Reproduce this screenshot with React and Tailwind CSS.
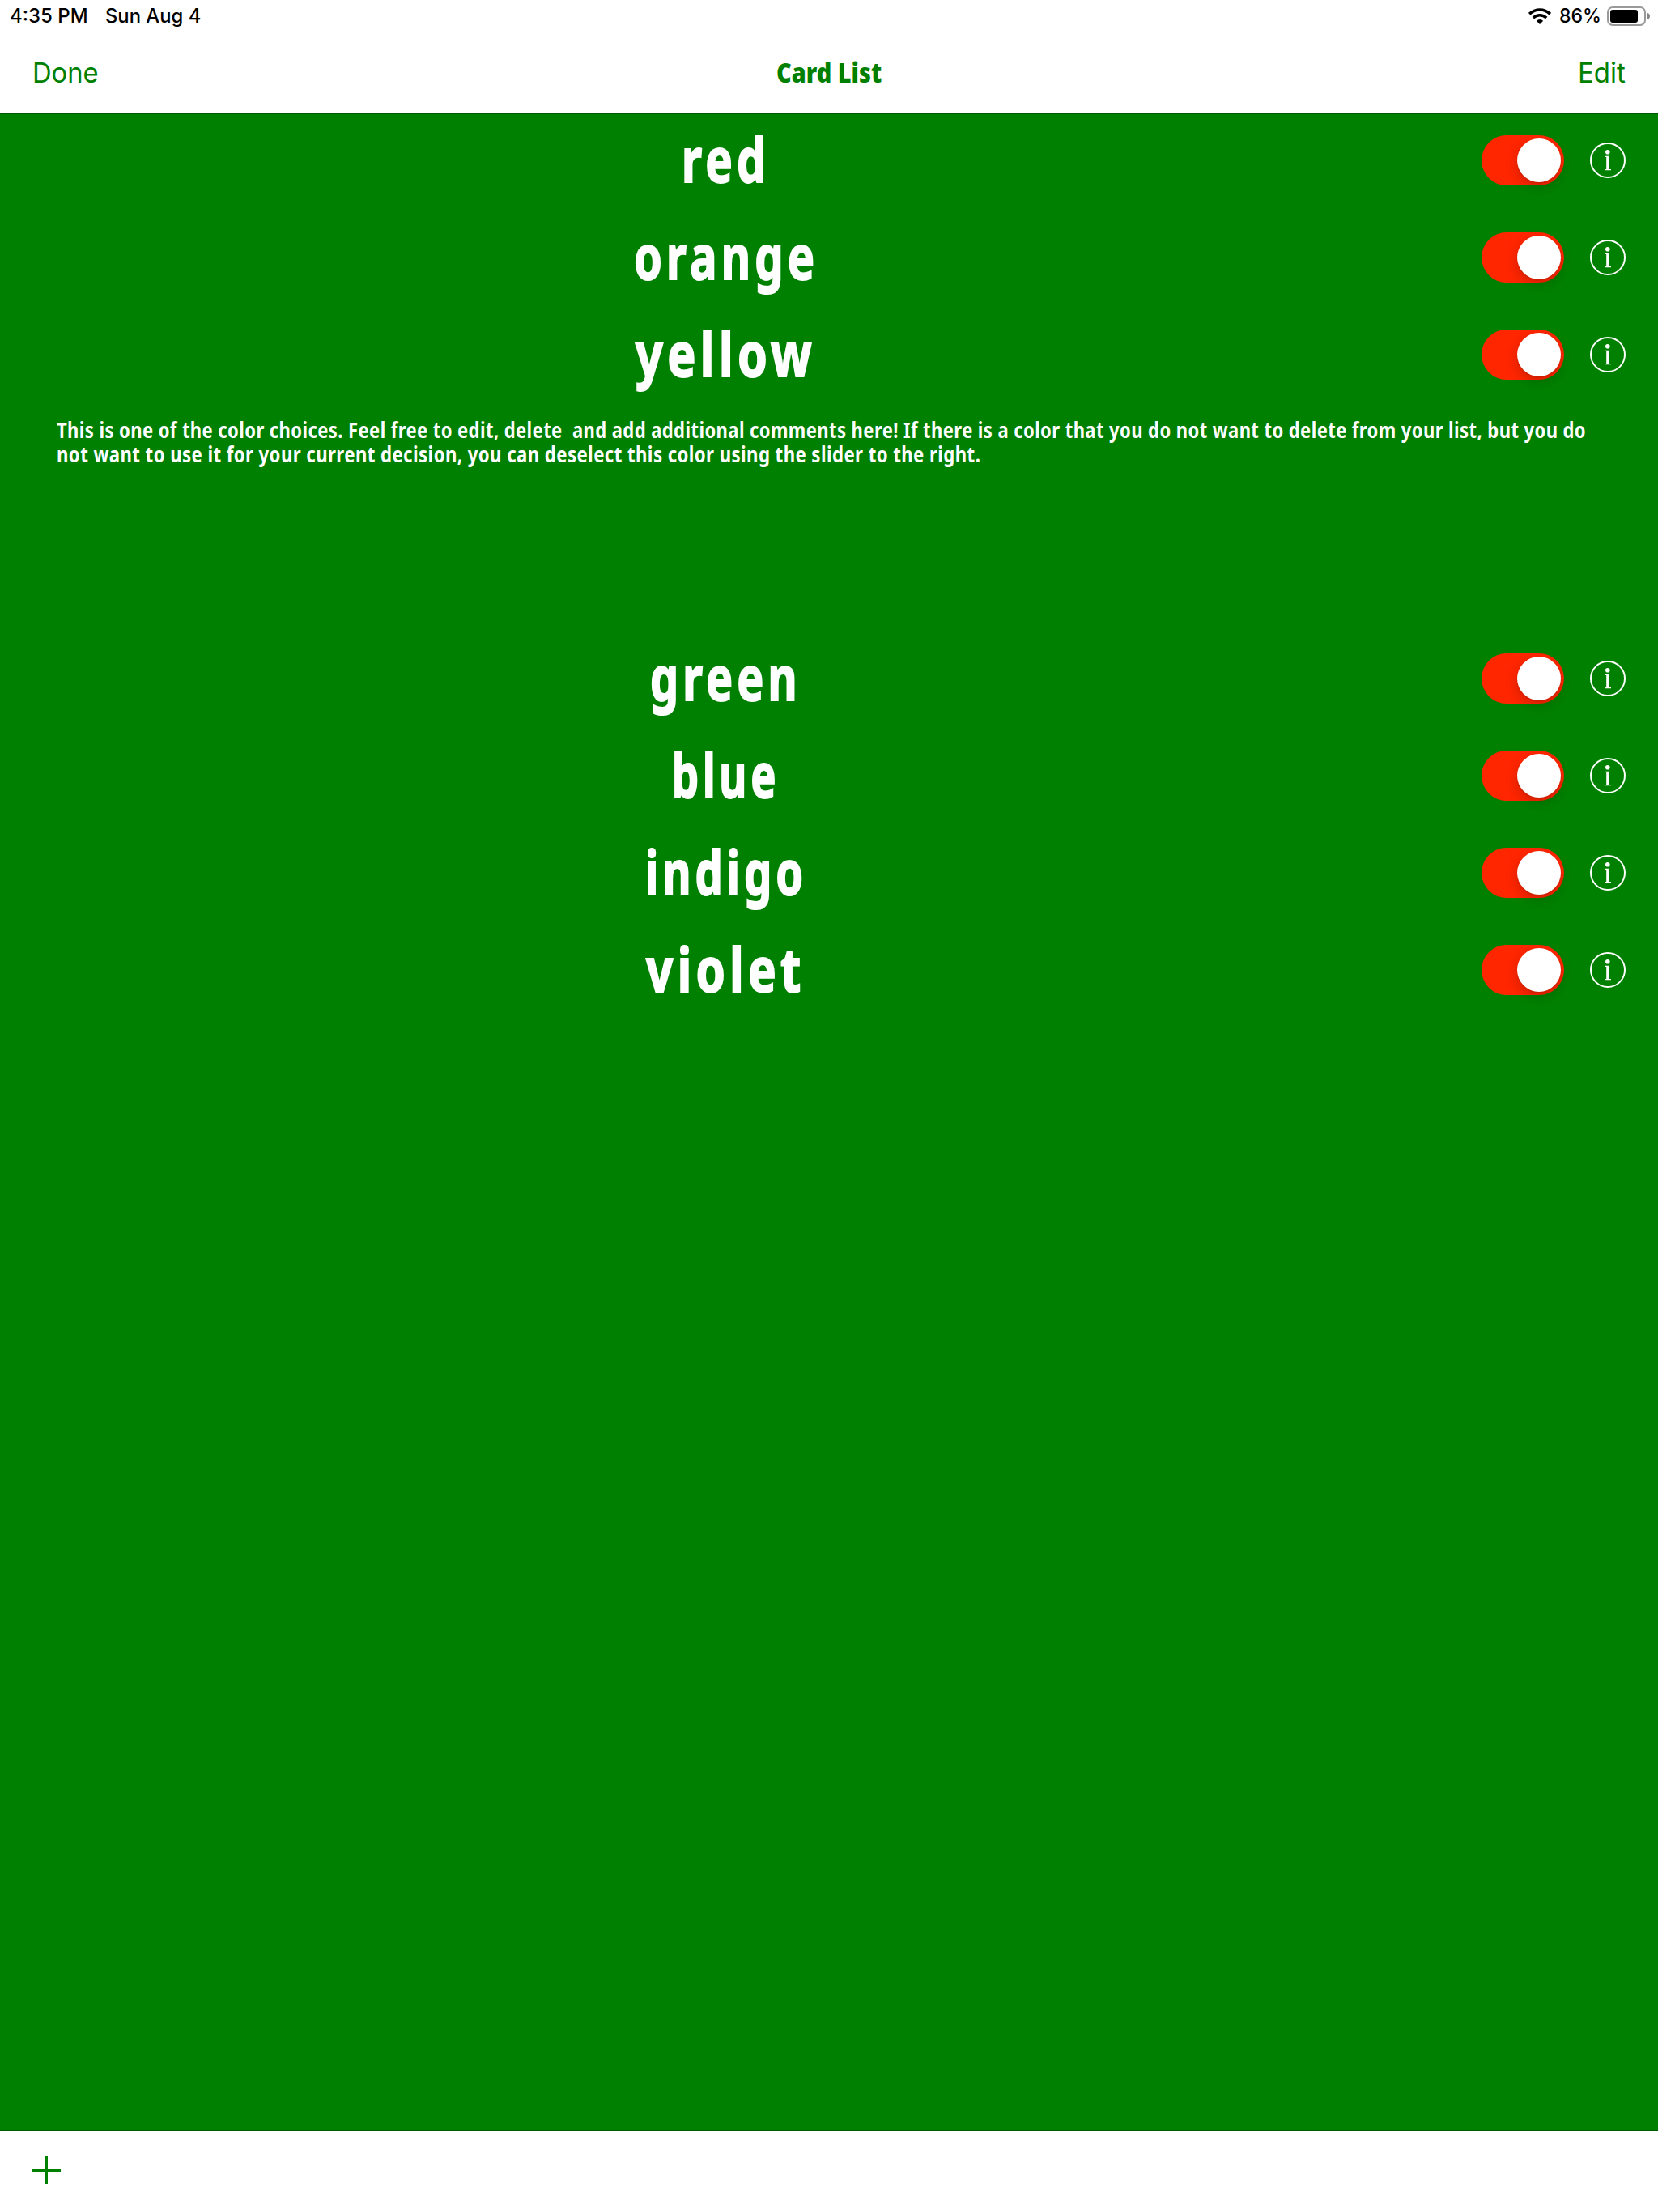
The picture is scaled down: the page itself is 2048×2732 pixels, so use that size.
import { useLayoutEffect, useRef, useState } from "react";

// Stretches or condenses one line of text horizontally to fill its box.
function Fit({ className = "", children }) {
  const box = useRef(null);
  const line = useRef(null);
  const [scale, setScale] = useState(1);
  useLayoutEffect(() => {
    const measure = () =>
      setScale(box.current.clientWidth / line.current.offsetWidth);
    measure();
    document.fonts?.ready.then(measure);
  }, []);
  return (
    <div ref={box} className={`shrink-0 whitespace-pre ${className}`}>
      <span
        ref={line}
        className="inline-block origin-left"
        style={{ transform: `scaleX(${scale})` }}
      >
        {children}
      </span>
    </div>
  );
}

const cards = [
  { name: "red", width: "w-[109px]" },
  { name: "orange", width: "w-[228px]" },
  { name: "yellow", width: "w-[223px]" },
  { name: "green", width: "w-[187px]" },
  { name: "blue", width: "w-[133px]" },
  { name: "indigo", width: "w-[200px]" },
  { name: "violet", width: "w-[197px]" },
];

const comment = [
  {
    text: "This is one of the color choices. Feel free to edit, delete  and add additional comments here! If there is a color that you do not want to delete from your list, but you do",
    width: "w-[1889px]",
  },
  {
    text: "not want to use it for your current decision, you can deselect this color using the slider to the right.",
    width: "w-[1141px]",
  },
];

function Toggle() {
  return (
    <div className="flex h-[62px] w-[102px] shrink-0 items-center justify-end rounded-full bg-[#ff2600] pr-1">
      <div className="size-[54px] rounded-full bg-white shadow-[0_6px_16px_rgba(0,0,0,0.18),0_2px_2px_rgba(0,0,0,0.08)]" />
    </div>
  );
}

function InfoIcon() {
  return (
    <svg className="ml-8 size-11 shrink-0" viewBox="0 0 44 44" fill="none">
      <circle cx="22" cy="22" r="21" stroke="white" strokeWidth="2" />
      <circle cx="21.8" cy="11.7" r="2.8" fill="white" />
      <path d="M18 16.7H24V33H26V34.2H18V33H20.2V18H18Z" fill="white" />
    </svg>
  );
}

function CardRow({ name, width }) {
  return (
    <div className="flex h-[120px] items-center pr-10">
      <div className="flex flex-1 justify-center pr-[37px] pb-[5px]">
        <Fit
          className={`text-[76px] leading-[115px] font-bold tracking-[7px] text-white [-webkit-text-stroke:2px_white] ${width}`}
        >
          {name}
        </Fit>
      </div>
      <Toggle />
      <InfoIcon />
    </div>
  );
}

export default function App() {
  return (
    <div className="flex h-[2732px] w-[2048px] flex-col overflow-hidden bg-white font-['Inter',sans-serif]">
      <div className="flex h-10 shrink-0 items-center pr-[9px] pl-3 text-[24px] leading-10 font-medium text-black">
        <Fit className="w-[97px]">4:35 PM</Fit>
        <Fit className="ml-[21px] w-[118px]">Sun Aug 4</Fit>
        <svg className="ml-auto h-[21px] w-7" viewBox="0 0 28 21" fill="none" stroke="black">
          <path d="M1.2 7.2C8.5.2 19.5.2 26.8 7.2" strokeWidth="3.6" />
          <path d="M5.8 12C10.5 7.6 17.5 7.6 22.2 12" strokeWidth="3.6" />
          <path d="M14 20L9.8 15.8Q14 12.4 18.2 15.8Z" fill="black" stroke="none" />
        </svg>
        <Fit className="ml-[10px] w-[52px]">86%</Fit>
        <svg className="ml-[7px] h-6 w-[54px]" viewBox="0 0 54 24" fill="none">
          <rect x="1" y="1" width="46" height="22" rx="6" stroke="#999" strokeWidth="2" />
          <rect x="4" y="4" width="34" height="16" rx="3" fill="black" />
          <path d="M50 8C54 9 54 15 50 16Z" fill="#888" />
        </svg>
      </div>

      <div className="flex h-[100px] shrink-0 items-center justify-between px-10 text-[33.5px] text-[#008000]">
        <div className="flex flex-1 pt-[1px]">
          <Fit className="w-[82px]">Done</Fit>
        </div>
        <Fit className="w-[130px] pb-[1px] font-['Noto_Sans',sans-serif] text-[34px] font-black">
          Card List
        </Fit>
        <div className="flex flex-1 justify-end pt-[1px]">
          <Fit className="w-[59px]">Edit</Fit>
        </div>
      </div>

      <div className="flex-1 border-y border-[#005a00] bg-[#008000] font-['Noto_Sans',sans-serif]">
        <div className="-mt-[3px]">
          {cards.slice(0, 3).map((card) => (
            <CardRow key={card.name} {...card} />
          ))}
          <div className="h-[280px] pt-[18px] pl-[70px]">
            {comment.map((line) => (
              <Fit
                key={line.width}
                className={`text-[27px] leading-[30px] font-bold tracking-[0.5px] text-white ${line.width}`}
              >
                {line.text}
              </Fit>
            ))}
          </div>
          {cards.slice(3).map((card) => (
            <CardRow key={card.name} {...card} />
          ))}
        </div>
      </div>

      <div className="flex h-[100px] shrink-0 items-center pl-10">
        <svg className="mb-1 size-[35px]" viewBox="0 0 35 35" stroke="#008000" strokeWidth="3">
          <path d="M17.5 0V35M0 17.5H35" />
        </svg>
      </div>
    </div>
  );
}
